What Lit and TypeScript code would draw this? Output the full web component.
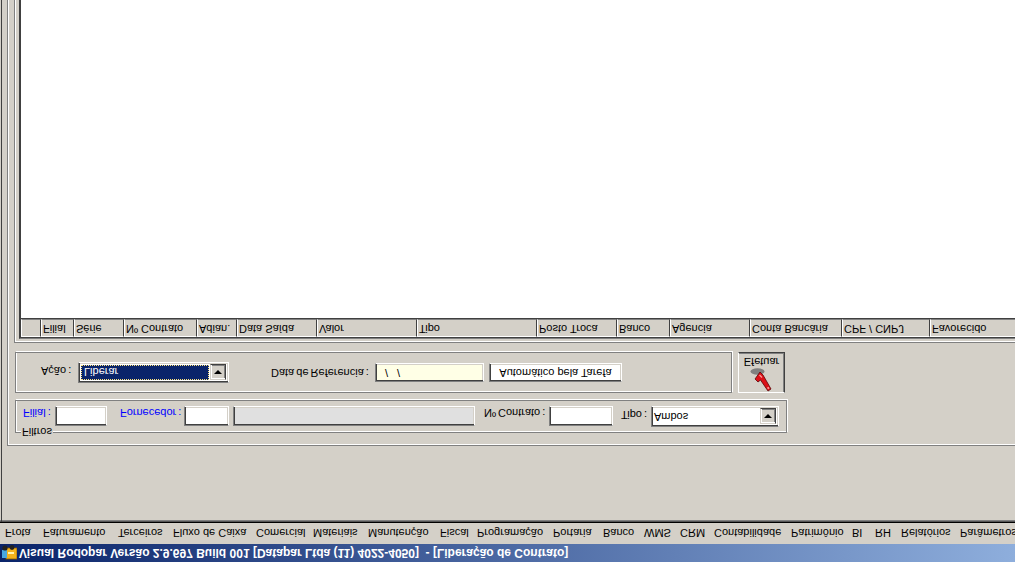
import { LitElement, html, css } from "lit";
import { customElement } from "lit/decorators.js";
import { styleMap } from "lit/directives/style-map.js";

const MENU: [string, number][] = [
  ["Frota", 38], ["Faturamento", 75], ["Terceiros", 55], ["Fluxo de Caixa", 83], ["Comercial", 57],
  ["Materiais", 55], ["Manutenção", 72], ["Fiscal", 37], ["Programação", 76], ["Portaria", 50],
  ["Banco", 41], ["WMS", 36], ["CRM", 34], ["Contabilidade", 77], ["Patrimônio", 61],
  ["BI", 23], ["RH", 26], ["Relatórios", 59], ["Parâmetros", 60],
];
const COLS: [string, number][] = [
  ["", 20], ["Filial", 33], ["Série", 50], ["Nº Contrato", 73], ["Adian.", 40], ["Data Saída", 80],
  ["Valor", 100], ["Tipo", 120], ["Posto Troca", 80], ["Banco", 53], ["Agencia", 80],
  ["Conta Bancária", 92], ["CPF / CNPJ", 88], ["Favorecido", 90],
];

@customElement("app-root")
export class AppRoot extends LitElement {
  static styles = css`
    :host {
      display: flex; flex-direction: column; width: 1015px; height: 562px; overflow: hidden;
      background: #d4d0c8; color: #000; transform: scaleY(-1);
      font: 11px/13px "Liberation Sans", Arial, sans-serif;
    }
    .title {
      flex: 0 0 18px; display: flex; align-items: center; gap: 2px; padding-left: 1px; white-space: pre;
      color: #fff; font-weight: 700; font-size: 12px; background: linear-gradient(90deg, #0a246a, #8eaedc);
    }
    .menu { flex: 0 0 20px; display: flex; padding: 1px 0 0 5px; align-items: center; white-space: nowrap; }
    .menu span { flex: none; }
    .window {
      flex: 1; min-height: 0; display: flex; flex-direction: column;
      border-top: 1px solid #000; box-shadow: inset 0 1px 0 #555, inset 0 2px 0 #808080;
      padding: 0 0 0 1px;
    }
    .mdi { flex: 1; min-height: 0; border-left: 1px solid #404040; display: flex; flex-direction: column; padding-top: 76px; }
    .page {
      flex: 1; min-height: 0; margin-left: 5px; border-top: 1px solid #808080; border-left: 1px solid #808080;
      box-shadow: inset 1px 1px 0 #fff; padding: 12px 0 0 7px; display: flex; flex-direction: column;
    }
    .row { display: flex; }
    .group { border: 1px solid #808080; box-shadow: 1px 1px 0 #fff, inset 1px 1px 0 #fff; box-sizing: border-box; display: flex; align-items: center; position: relative; }
    .filters { width: 772px; height: 33px; }
    .legend { position: absolute; left: 5px; top: -6px; padding: 0 1px; background: #d4d0c8; }
    .blue { color: #0000ff; }
    .lbl { flex: none; white-space: nowrap; word-spacing: -1px; margin-top: 4px; }
    .low { margin-top: 8px; }
    .l-filial { margin-left: 7px; width: 32px; }
    .l-forn { margin-left: 13px; width: 64px; }
    .l-contr { margin-left: 9px; width: 65px; }
    .l-tipo { margin-left: 8px; width: 30px; }
    .l-acao { margin-left: 25px; width: 37px; }
    .l-data { margin-left: 42px; width: 104px; margin-top: 0; }
    .field {
      box-sizing: border-box; height: 20px; flex: none; background: #fff; display: flex; align-items: center;
      border: 1px solid; border-color: #808080 #fff #fff #808080; box-shadow: inset 1px 1px 0 #404040, inset -1px -1px 0 #d4d0c8;
      padding-left: 3px; overflow: hidden; white-space: nowrap;
    }
    .f-filial { width: 52px; }
    .f-forn { width: 45px; }
    .f-name { width: 242px; margin-left: 4px; background: #e0e0e0; }
    .f-contr { width: 64px; }
    .f-tipo { width: 128px; height: 21px; }
    .f-acao { width: 151px; height: 21px; padding: 2px; }
    .cream { width: 109px; height: 19px; background: #ffffe6; padding-left: 9px; letter-spacing: 3px; }
    .auto { width: 133px; height: 19px; margin-left: 5px; justify-content: center; padding: 0; }
    .combo { justify-content: space-between; padding-right: 2px; padding-left: 2px; }
    .arrowbtn {
      flex: none; width: 16px; height: 16px; box-sizing: border-box; background: #d4d0c8; display: flex; align-items: center; justify-content: center;
      border: 1px solid; border-color: #d4d0c8 #404040 #404040 #d4d0c8; box-shadow: inset 1px 1px 0 #fff, inset -1px -1px 0 #808080;
    }
    .arrowbtn i { width: 0; height: 0; border: 4px solid transparent; border-bottom-width: 0; border-top: 4px solid #000; }
    .selected {
      flex: 1; margin-right: 1px; height: 15px; line-height: 13px; color: #fff; background: #0a246a; outline: 1px dotted #ffe680; outline-offset: -1px; padding: 2px 0 0 3px; box-sizing: border-box; overflow: hidden;
    }
    .actions-row { margin-top: 7px; gap: 6px; }
    .actions { width: 717px; height: 41px; }
    .btn {
      box-sizing: border-box; width: 47px; height: 41px; border: 1px solid; border-color: #fff #404040 #404040 #fff;
      box-shadow: inset -1px -1px 0 #808080;
      display: flex; flex-direction: column; align-items: center;
    }
    .btn svg { display: block; }
    .gridwrap {
      flex: 1; min-height: 0; margin-top: 9px; border-top: 1px solid #808080; border-left: 1px solid #808080;
      box-shadow: inset 1px 1px 0 #fff; padding: 3px 0 0 4px; display: flex; flex-direction: column; margin-left: -1px;
    }
    .grid { flex: 1; min-height: 0; background: #fff; border-top: 1px solid #808080; border-left: 1px solid #404040; box-shadow: inset 1px 1px 0 #404040; padding: 1px 0 0 1px; }
    .head { display: flex; height: 19px; background: #404040; }
    .cell {
      flex: none; box-sizing: border-box; height: 18px; background: #d4d0c8; padding: 1px 0 0 1px; white-space: nowrap; overflow: hidden;
      border-top: 1px solid #fff; border-left: 1px solid #fff; border-bottom: 1px solid #808080; border-right: 1px solid #404040;
    }
  `;

  render() {
    return html`
      <div class="title">
        <svg width="16" height="16" viewBox="0 0 16 16">
          <rect x="5" y="2" width="11" height="11" fill="#f2b21c" stroke="#8a5a00" stroke-width=".8" />
          <rect x="1" y="3" width="5" height="8" fill="#4aa8e0" />
          <circle cx="4" cy="13" r="2.6" fill="#222" />
          <circle cx="11" cy="13.5" r="2.4" fill="#222" />
          <rect x="7" y="7" width="6" height="2" fill="#fff3b0" />
        </svg>
        <span>Visual Rodopar Versão 2.9.697 Build 001 [Datapar Ltda (11) 4022-4050]  - [Liberação de Contrato]</span>
      </div>
      <div class="menu">
        ${MENU.map(([t, w]) => html`<span style=${styleMap({ width: w + "px" })}>${t}</span>`)}
      </div>
      <div class="window">
        <div class="mdi">
          <div class="page">
            <div class="group filters">
              <div class="legend">Filtros</div>
              <span class="lbl low blue l-filial">Filial :</span>
              <div class="field f-filial"></div>
              <span class="lbl low blue l-forn">Fornecedor :</span>
              <div class="field f-forn"></div>
              <div class="field f-name"></div>
              <span class="lbl low l-contr">Nº Contrato :</span>
              <div class="field f-contr"></div>
              <span class="lbl l-tipo">Tipo :</span>
              <div class="field combo f-tipo"><span>Ambos</span><div class="arrowbtn"><i></i></div></div>
            </div>
            <div class="row actions-row">
              <div class="group actions">
                <span class="lbl l-acao">Ação :</span>
                <div class="field combo f-acao"><div class="selected">Liberar</div><div class="arrowbtn"><i></i></div></div>
                <span class="lbl l-data">Data de Referencia :</span>
                <div class="field cream">/ /</div>
                <div class="field auto">Automático pela Tarefa</div>
              </div>
              <div class="btn">
                <svg width="24" height="24" viewBox="0 0 24 24">
                  <ellipse cx="7.5" cy="20.5" rx="7" ry="3.2" fill="#808080" />
                  <path d="M10 20 L13 17 L21 3 L18 1 L10.5 12 L8 10 L5 13 Z" fill="#dc1018" stroke="#5a0508" stroke-width=".8" />
                  <path d="M9.5 17 L12 14.5" stroke="#ff9a9a" stroke-width="1.2" />
                  <path d="M17.5 3.5 L19 4.5" stroke="#ff9a9a" stroke-width="2" />
                </svg>
                <span>Efetuar</span>
              </div>
            </div>
            <div class="gridwrap">
              <div class="grid">
                <div class="head">
                  ${COLS.map(([t, w]) => html`<div class="cell" style=${styleMap({ width: w + "px" })}>${t}</div>`)}
                </div>
              </div>
            </div>
          </div>
        </div>
      </div>
    `;
  }
}
